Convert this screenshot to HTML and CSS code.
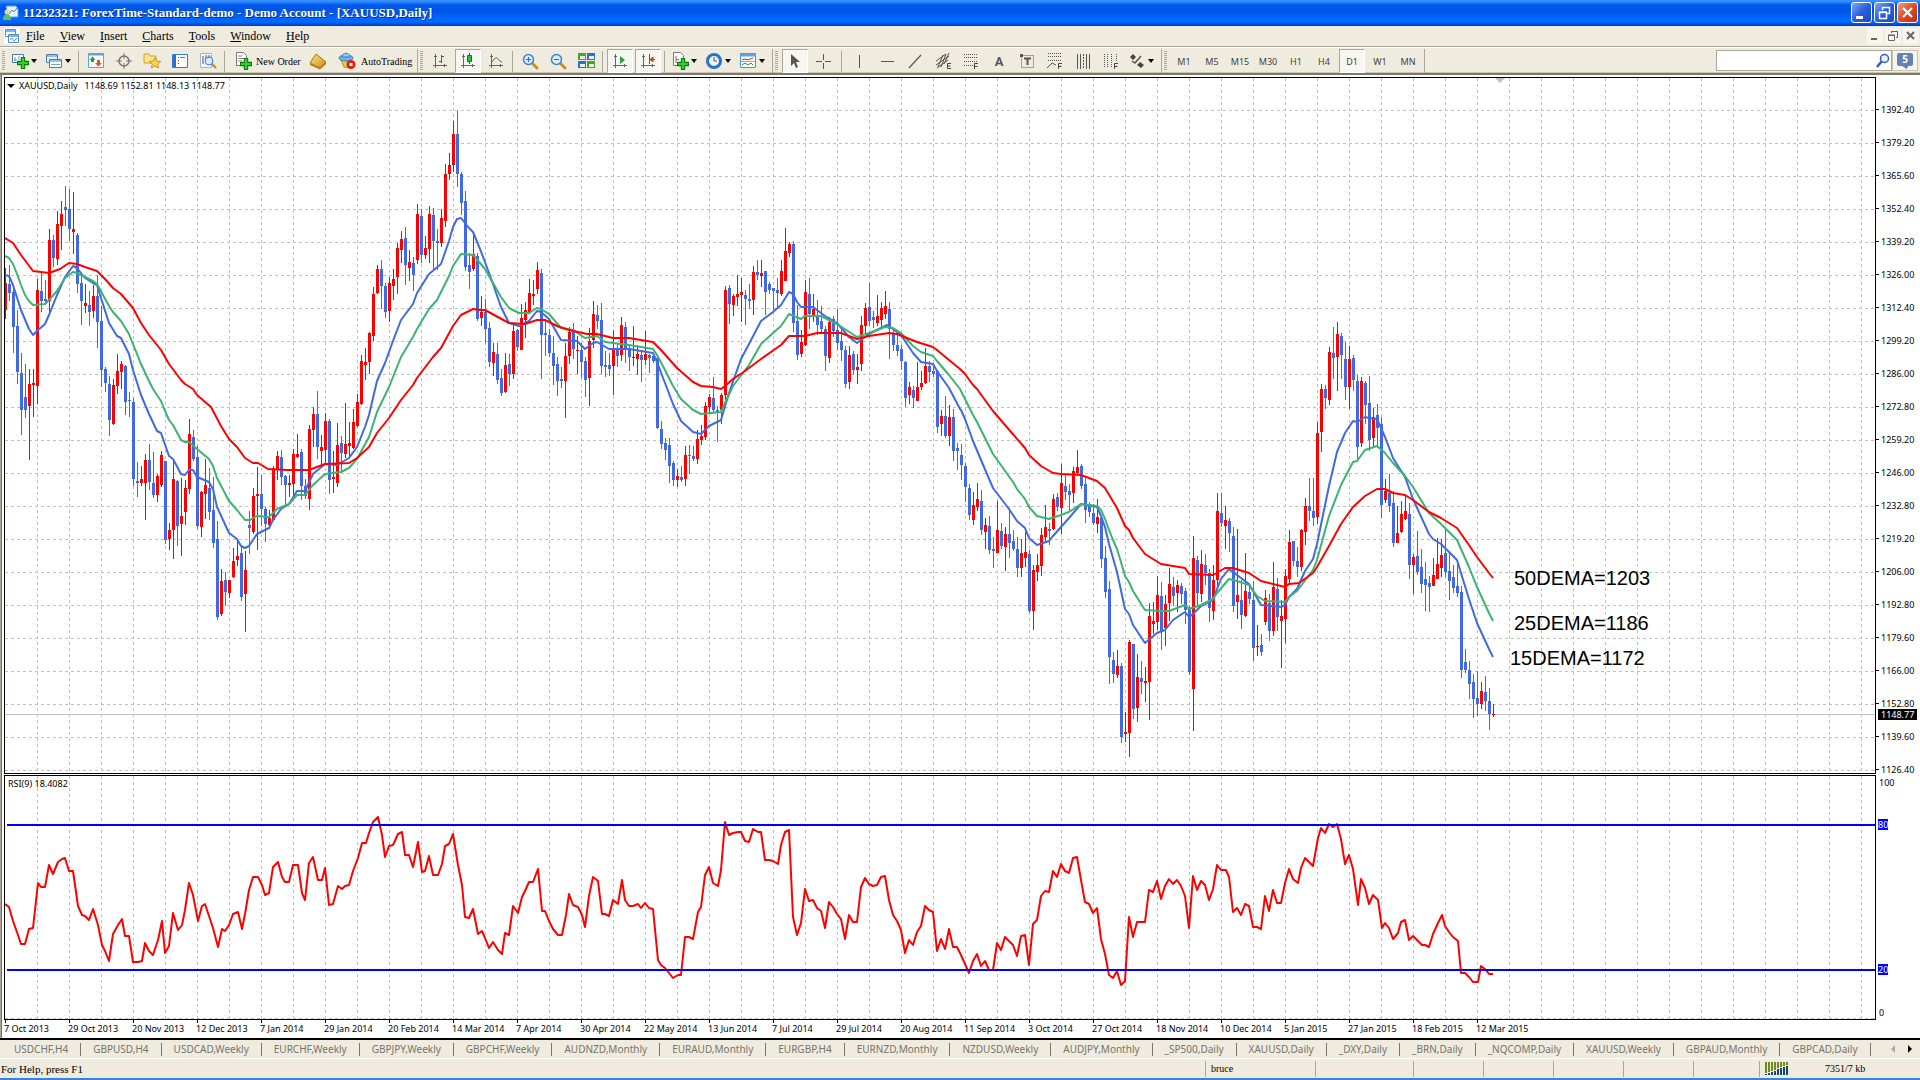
FILE: index.html
```html
<!DOCTYPE html>
<html lang="en">
<head>
<meta charset="utf-8">
<title>11232321: ForexTime-Standard-demo - Demo Account - [XAUUSD,Daily]</title>
<link rel="stylesheet" href="styles.css">
</head>
<body>
<svg class="defs" width="0" height="0" aria-hidden="true">
  <defs>
    <symbol id="plus" viewBox="0 0 11 11"><path d="M4 .5h3V4h3.500v3H7v3.500H4V7H.5V4H4z" fill="#2fd02f" stroke="#0a7a0a"/></symbol>
    <symbol id="axes" viewBox="0 0 16 16"><path d="M3.500 1v14M1 12.500h14M2 3.500h3M12.500 11v3" fill="none" stroke="#666"/></symbol>
    <symbol id="lens" viewBox="0 0 17 17"><path d="M10 10l5 5" stroke="#c89020" stroke-width="3" stroke-linecap="round"/><circle cx="6.500" cy="6.500" r="5" fill="#d8ecff" stroke="#3f83cf" stroke-width="1.500"/></symbol>
    <symbol id="f" viewBox="0 0 5 6"><path d="M.5 6V.5H4M.5 3.500h3" fill="none" stroke="#444"/></symbol>
    <linearGradient id="gold" x1="0" y1="0" x2="1" y2="1"><stop offset="0" stop-color="#ffe890"/><stop offset="1" stop-color="#c88a10"/></linearGradient>
  </defs>
</svg>

<header class="titlebar">
  <svg class="app-icon" width="16" height="16" viewBox="0 0 16 16"><path d="M3 1h10l2 3v8H5z" fill="#e8f4ff" stroke="#5aa0e8"/><path d="M6 9l3-4 2 2 3-4" fill="none" stroke="#3f83cf"/><circle cx="4" cy="7" r="2.500" fill="#f4cf9a"/><path d="M0 15c0-4 2-6 4-6s4 2 4 6z" fill="#5fc05f"/></svg>
  <h1 class="title">11232321: ForexTime-Standard-demo - Demo Account - [XAUUSD,Daily]</h1>
  <div class="window-buttons">
    <button class="wbtn" aria-label="Minimize"><svg width="19" height="19"><path d="M4 13h7v3H4z" fill="#fff"/></svg></button>
    <button class="wbtn" aria-label="Restore"><svg width="19" height="19"><path d="M7.500 7V4.500h7v6H12M7 4.500h8M4.500 9.500h7v6h-7zM4 9h8" fill="none" stroke="#fff" stroke-width="1.500"/></svg></button>
    <button class="wbtn close" aria-label="Close"><svg width="19" height="19"><path d="M5 5l9 9M14 5l-9 9" stroke="#fff" stroke-width="2.200"/></svg></button>
  </div>
</header>

<nav class="menubar">
  <svg class="doc-icon" width="16" height="16" viewBox="0 0 16 16"><path d="M1.500 1.500h10v7h-10zM4.500 6.500h10v8h-10z" fill="#fff" stroke="#4f8fd8"/><path d="M2 3h9M5 8h9" stroke="#7fb4ee" stroke-width="2"/><path d="M6 12l2-2 2 3 3-3" fill="none" stroke="#4f8fd8"/></svg>
  <button class="menu"><u>F</u>ile</button>
  <button class="menu"><u>V</u>iew</button>
  <button class="menu"><u>I</u>nsert</button>
  <button class="menu"><u>C</u>harts</button>
  <button class="menu"><u>T</u>ools</button>
  <button class="menu"><u>W</u>indow</button>
  <button class="menu"><u>H</u>elp</button>
  <div class="mdi-buttons">
    <button class="mbtn" aria-label="Minimize chart"><svg width="16" height="16"><path d="M4 10h6v2H4z" fill="#666"/></svg></button>
    <button class="mbtn" aria-label="Restore chart"><svg width="16" height="16"><path d="M6.500 5V3.500h6v6H11M6 3.500h7M3.500 7.500h6v5h-6zM3 7h7" fill="none" stroke="#666"/></svg></button>
    <button class="mbtn" aria-label="Close chart"><svg width="16" height="16"><path d="M4 4l7 7M11 4l-7 7" stroke="#666" stroke-width="2"/></svg></button>
  </div>
</nav>

<div class="toolbar">
  <div class="group">
    <i class="grip"></i>
    <button class="tool drop" aria-label="New chart"><svg width="18" height="18" viewBox="0 0 18 18"><path d="M1.500 2.500h11v8h-11z" fill="#fff" stroke="#4b79a8"/><path d="M4 5v4M8 4v4M3 8h3" stroke="#6d9dcb"/><use href="#plus" x="6" y="5" width="12" height="12"/></svg><i class="caret"></i></button>
    <button class="tool drop" aria-label="Profiles"><svg width="18" height="18" viewBox="0 0 18 18"><path d="M1.500 2.500h11v8h-11z" fill="#e6f1ff" stroke="#4b79a8"/><path d="M4.500 7.500h12v8h-12z" fill="#fff" stroke="#4b79a8"/><path d="M2 4h10M5 9h11" stroke="#8fbdf0" stroke-width="2"/><path d="M6 12.500h9" stroke="#7aa3cc"/></svg><i class="caret"></i></button>
    <i class="sep"></i>
    <button class="tool" aria-label="Market Watch"><svg width="18" height="18" viewBox="0 0 18 18"><path d="M1.500 1.500h15v14h-15z" fill="#fff" stroke="#5ba2e6"/><path d="M1 2.500h16" stroke="#5ba2e6" stroke-width="2"/><path d="M2.500 8l3-3.500 3 3.500h-1.500v2h-3V8z" fill="#24a324"/><path d="M8 11l3.500 3.500L15 11h-2V8h-3v3z" fill="#e1512b"/></svg></button>
    <button class="tool" aria-label="Data Window"><svg width="18" height="18" viewBox="0 0 18 18"><circle cx="9" cy="9" r="5" fill="none" stroke="#777" stroke-width="1.500"/><path d="M9 1v6M9 11v6M1 9h6M11 9h6" stroke="#777"/></svg></button>
    <button class="tool" aria-label="Navigator"><svg width="18" height="18" viewBox="0 0 18 18"><path d="M1 2h5l1 2h6v7H1z" fill="#fce38d" stroke="#d1a437"/><path d="M12 5.500l1.700 3.600 4 .4-3 2.600.9 3.900-3.600-2-3.600 2 .9-3.900-3-2.600 4-.4z" fill="#ffd544" stroke="#b98619" stroke-width=".8"/></svg></button>
    <button class="tool" aria-label="Terminal"><svg width="18" height="18" viewBox="0 0 18 18"><path d="M1.500 2.500h15v13h-15z" fill="#fff" stroke="#2f7ed8"/><path d="M2 3h3v12H2z" fill="#2f6dd0"/><path d="M7 5.500h1M9 5.500h5M7 8.500h1" stroke="#e44"/><path d="M7 11.500h1" stroke="#444"/></svg></button>
    <button class="tool" aria-label="Strategy Tester"><svg width="18" height="18" viewBox="0 0 18 18"><path d="M1.500 1.500h11v14h-11z" fill="#f4f8fc" stroke="#9db4ca"/><path d="M4 4v8M7 3v5M10 3v3" stroke="#557"/><use href="#lens" x="5" y="4" width="13" height="13"/></svg></button>
    <i class="sep"></i>
    <button class="tool neworder"><svg width="18" height="18" viewBox="0 0 18 18"><path d="M2.500.5h7l3 3v10h-10z" fill="#fff" stroke="#777"/><path d="M4 4h4M4 6.500h6M4 9h4" stroke="#888"/><use href="#plus" x="6" y="6" width="12" height="12"/></svg><span>New Order</span></button>
    <button class="tool" aria-label="MetaEditor"><svg width="18" height="18" viewBox="0 0 18 18"><path d="M7 2l10 8-6 6L1 11z" fill="url(#gold)" stroke="#a8740c"/><path d="M1 11l10 5 6-6v2l-6 5.500L1 13z" fill="#b27c12"/></svg></button>
    <button class="tool auto"><svg width="18" height="18" viewBox="0 0 18 18"><path d="M3 8h11l-2 8-6-1z" fill="#f2c94c" stroke="#b58a20"/><ellipse cx="8" cy="6" rx="7" ry="3" fill="#6fb3ea" stroke="#3c7fbd"/><path d="M4 5c0-5 8-5 8 0z" fill="#8ccaf5" stroke="#3c7fbd"/><circle cx="13" cy="12.500" r="4.500" fill="#dc2213"/><path d="M11.500 11h3v3h-3z" fill="#fff"/></svg><span>AutoTrading</span></button>
  </div>
  <div class="group">
    <i class="grip"></i>
    <button class="tool" aria-label="Bar Chart"><svg width="16" height="16"><use href="#axes" width="16" height="16"/><path d="M9.500 2v8M7 8.500h2M10 3.500h2" stroke="#17892b"/></svg></button>
    <button class="tool on" aria-label="Candlesticks"><svg width="16" height="16"><use href="#axes" width="16" height="16"/><path d="M9.500 0v11" stroke="#0a7a1c"/><path d="M7.500 2.500h4v6h-4z" fill="#1fc23c" stroke="#0a7a1c"/></svg></button>
    <button class="tool" aria-label="Line Chart"><svg width="16" height="16"><use href="#axes" width="16" height="16"/><path d="M4 9c3-5 5-5 6-3s2 2 4 3" fill="none" stroke="#17892b"/></svg></button>
    <i class="sep"></i>
    <button class="tool" aria-label="Zoom In"><svg width="17" height="17"><use href="#lens" width="17" height="17"/><path d="M4 6.500h5M6.500 4v5" stroke="#2a6cc0"/></svg></button>
    <button class="tool" aria-label="Zoom Out"><svg width="17" height="17"><use href="#lens" width="17" height="17"/><path d="M4 6.500h5" stroke="#2a6cc0"/></svg></button>
    <button class="tool" aria-label="Tile Windows"><svg width="17" height="16"><path d="M0 0h8v7H0zM9 8h8v7H9z" fill="#45a52d"/><path d="M9 0h8v7H9zM0 8h8v7H0z" fill="#2f6fd0"/><path d="M2 3h5v3H2zM11 3h5v3h-5zM2 11h5v3H2zM11 11h5v3h-5z" fill="#e6f2ea"/></svg></button>
    <i class="sep"></i>
    <button class="tool on" aria-label="Auto Scroll"><svg width="16" height="16"><use href="#axes" width="16" height="16"/><path d="M8 3l5 4-5 4z" fill="#22a53a"/></svg></button>
    <button class="tool on" aria-label="Chart Shift"><svg width="16" height="16"><use href="#axes" width="16" height="16"/><path d="M9.500 1v10" stroke="#2a5fae"/><path d="M15 6.500h-4M13 4l-3 2.500 3 2.500z" stroke="#c84010" fill="#c84010"/></svg></button>
    <i class="sep"></i>
    <button class="tool drop" aria-label="Indicators"><svg width="18" height="18" viewBox="0 0 18 18"><path d="M2.500.5h7l3 3v10h-10z" fill="#fff" stroke="#777"/><path d="M5 4v7M5 7.500h3" stroke="#777"/><use href="#plus" x="6" y="6" width="12" height="12"/></svg><i class="caret"></i></button>
    <button class="tool drop" aria-label="Periods"><svg width="18" height="18" viewBox="0 0 18 18"><circle cx="9" cy="9" r="6.500" fill="#eef6ff" stroke="#2672cc" stroke-width="3"/><path d="M9 5v4h3" fill="none" stroke="#555"/></svg><i class="caret"></i></button>
    <button class="tool drop" aria-label="Templates"><svg width="18" height="18" viewBox="0 0 18 18"><path d="M1.500 1.500h15v14h-15z" fill="#fff" stroke="#4f8fd8"/><path d="M1 3h16" stroke="#5b9fe8" stroke-width="3"/><path d="M3 8l3-1 3 1 5-2" fill="none" stroke="#b23a1c"/><path d="M3 13l3-2 3 2 3-2 2 2" fill="none" stroke="#27903a"/><path d="M2 9.500h14" stroke="#aac"/></svg><i class="caret"></i></button>
  </div>
  <div class="group">
    <i class="grip"></i>
    <button class="tool on" aria-label="Cursor"><svg width="16" height="16"><path d="M4 1v12l3-3 2 5 2-1-2-5h4z" fill="#555"/></svg></button>
    <button class="tool" aria-label="Crosshair"><svg width="16" height="16"><path d="M8.500 1v6M8.500 10v6M1 8.500h6M10 8.500h6" stroke="#555"/></svg></button>
    <i class="sep wide"></i>
    <button class="tool" aria-label="Vertical Line"><svg width="16" height="16"><path d="M8.500 2v13" stroke="#555"/></svg></button>
    <button class="tool" aria-label="Horizontal Line"><svg width="16" height="16"><path d="M2 8.500h13" stroke="#555"/></svg></button>
    <button class="tool" aria-label="Trendline"><svg width="16" height="16"><path d="M2 15L14 2" stroke="#555" stroke-width="1.200"/></svg></button>
    <button class="tool" aria-label="Equidistant Channel"><svg width="18" height="18"><path d="M2 9L12 2M2 13L15 4M3 16L14 8M4 15L9 3M7 15L12 2M10 12L15 1" stroke="#555"/><path d="M17 11.500h-3.500v5H17M13.500 14h3" fill="none" stroke="#444"/></svg></button>
    <button class="tool" aria-label="Fibonacci Retracement"><svg width="18" height="18"><path d="M2 2.500h14M2 5.500h14M2 9.500h14M2 13.500h9" stroke="#555" stroke-dasharray="1 1"/><use href="#f" x="12" y="11" width="5" height="6"/></svg></button>
    <button class="tool letter" aria-label="Text">A</button>
    <button class="tool" aria-label="Text Label"><svg width="16" height="16"><path d="M2.500 2.500h12v12h-12z" fill="none" stroke="#555" stroke-dasharray="1 1"/><path d="M5 5.500h7M8.500 5v7" stroke="#555" stroke-width="2"/><path d="M1 1h3v3H1z" fill="#555"/></svg></button>
    <button class="tool" aria-label="Fibonacci Fan"><svg width="18" height="18"><path d="M2 1.500h14M2 4.500h14M2 8.500h14" stroke="#555" stroke-dasharray="1 1"/><path d="M1 16l5-5 4 2" fill="none" stroke="#555"/><use href="#f" x="12" y="11" width="5" height="6"/></svg></button>
    <button class="tool" aria-label="Cycle Lines"><svg width="16" height="16"><path d="M2.500 1v15M5.500 1v15M11.500 1v15M14.500 1v15" stroke="#555"/><path d="M8.500 1v15" stroke="#555" stroke-dasharray="2 1"/></svg></button>
    <button class="tool" aria-label="Fibonacci Time Zones"><svg width="18" height="18"><path d="M2.500 2v14M5.500 2v14M9.500 2v14M14.500 2v8" stroke="#555" stroke-dasharray="1 1"/><use href="#f" x="12" y="11" width="5" height="6"/></svg></button>
    <button class="tool drop" aria-label="Arrows"><svg width="18" height="18"><path d="M2 5l3-3 3 3-3 3zM9 13l3-3 4 3-3 3z" fill="#444"/><path d="M4 9l3 2 6-7" fill="none" stroke="#555" stroke-width="1.500"/></svg><i class="caret"></i></button>
  </div>
  <div class="group">
    <i class="grip"></i>
    <button class="tool frame">M1</button>
    <button class="tool frame">M5</button>
    <button class="tool frame">M15</button>
    <button class="tool frame">M30</button>
    <button class="tool frame">H1</button>
    <button class="tool frame">H4</button>
    <button class="tool frame on">D1</button>
    <button class="tool frame">W1</button>
    <button class="tool frame">MN</button>
  </div>
  <div class="search">
    <input type="text" aria-label="Search">
    <svg width="16" height="16"><circle cx="9.500" cy="5.500" r="4" fill="#eef5ff" stroke="#2d5fc4" stroke-width="1.500"/><path d="M6.500 8.500L2 14" stroke="#2d5fc4" stroke-width="2.500"/></svg>
  </div>
  <button class="chat" aria-label="Messages"><span>5</span><svg width="6" height="3"><path d="M0 0h6L5 3z" fill="#6682b0"/></svg></button>
</div>

<main class="chart-window">
  <section class="panel price-panel">
    <svg id="price" class="plot" aria-label="XAUUSD daily candlestick chart"></svg>
    <p class="caption"><i class="caret"></i><span>XAUUSD,Daily&nbsp;&nbsp; 1148.69 1152.81 1148.13 1148.77</span></p>
  </section>
  <div class="scale">
    <ol class="prices" id="prices"></ol>
    <span class="badge last">1148.77</span>
  </div>
  <section class="panel rsi-panel">
    <svg id="rsi" class="plot" aria-label="RSI chart"></svg>
    <p class="caption">RSI(9) 18.4082</p>
  </section>
  <div class="scale rsi-scale">
    <span>100</span>
    <span>0</span>
    <span class="badge over">80</span>
    <span class="badge under">20</span>
  </div>
  <ol class="dates" id="dates"></ol>
</main>

<nav class="tabs">
  <a class="tab" href="#">USDCHF,H4</a><a class="tab" href="#">GBPUSD,H4</a><a class="tab" href="#">USDCAD,Weekly</a><a class="tab" href="#">EURCHF,Weekly</a><a class="tab" href="#">GBPJPY,Weekly</a><a class="tab" href="#">GBPCHF,Weekly</a><a class="tab" href="#">AUDNZD,Monthly</a><a class="tab" href="#">EURAUD,Monthly</a><a class="tab" href="#">EURGBP,H4</a><a class="tab" href="#">EURNZD,Monthly</a><a class="tab" href="#">NZDUSD,Weekly</a><a class="tab" href="#">AUDJPY,Monthly</a><a class="tab" href="#">_SP500,Daily</a><a class="tab" href="#">XAUUSD,Daily</a><a class="tab" href="#">_DXY,Daily</a><a class="tab" href="#">_BRN,Daily</a><a class="tab" href="#">_NQCOMP,Daily</a><a class="tab" href="#">XAUUSD,Weekly</a><a class="tab" href="#">GBPAUD,Monthly</a><a class="tab" href="#">GBPCAD,Daily</a>
  <div class="tab-scroll">
    <button class="arrow" aria-label="Scroll left"><svg width="4" height="8"><path d="M4 0v8L0 4z" fill="#aaa"/></svg></button>
    <button class="arrow" aria-label="Scroll right"><svg width="4" height="8"><path d="M0 0v8l4-4z" fill="#000"/></svg></button>
  </div>
</nav>

<footer class="status">
  <span>For Help, press F1</span>
  <span>bruce</span><span></span><span></span><span></span><span></span><span></span><span></span>
  <span class="traffic"><svg width="24" height="13"><path d="M1 0v11M4 0v10M7 0v9M10 0v8M13 0v6M16 0v5M19 0v4M22 0v3" stroke="#6d8a1c" stroke-width="2"/><path d="M1 12v1M4 11v2M7 10v3M10 9v4M13 7v6M16 6v7M19 5v8M22 4v9" stroke="#16466b" stroke-width="2"/></svg>7351/7 kb</span>
</footer>
<script src="chart.js"></script>
</body>
</html>
```
FILE: styles.css
```css
* { box-sizing: border-box; }
body {
  margin: 0;
  min-height: 100vh;
  display: flex;
  flex-direction: column;
  background: #efebde;
  color: #000;
  font-family: "Liberation Serif", serif;
  font-size: 12px;
  border-bottom: 2px solid #3a83dc;
}
button { font: inherit; color: inherit; padding: 0; border: 0; background: none; }
ol { list-style: none; margin: 0; padding: 0; }
.defs { position: absolute; }

/* Title bar */
.titlebar {
  display: flex;
  align-items: center;
  height: 26px;
  padding: 0 2px 0 3px;
  background: linear-gradient(#3d95ff 0, #2b85ff 2px, #0058ea 5px, #0054e3 11px, #0066ff 18px, #006aff 22px, #0045d0 25px, #0038b8 26px);
}
.title {
  flex: 1;
  margin: 0 0 0 4px;
  font-size: 13px;
  line-height: 16px;
  color: #fff;
  text-shadow: 1px 1px #0a2a80;
}
.window-buttons { display: flex; gap: 2px; padding-bottom: 2px; }
.wbtn {
  width: 21px;
  height: 21px;
  border: 1px solid #fff;
  border-radius: 3px;
  background: linear-gradient(135deg, #7fa6f4, #2a5fe0 50%, #1c49c4);
}
.wbtn.close { background: linear-gradient(135deg, #f0a088, #e04a22 50%, #b8330f); }
.wbtn svg, .mbtn svg { display: block; }

/* Menu */
.menubar { display: flex; align-items: center; height: 20px; padding: 0 1px 0 4px; }
.doc-icon { margin-right: 6px; background: #fff; }
.menu { height: 18px; padding: 0; margin-right: 15px; }
.mdi-buttons { display: flex; gap: 2px; margin-left: auto; }
.mbtn { width: 16px; height: 16px; background: #f7f5ee; }

/* Toolbars */
.toolbar {
  display: flex;
  height: 29px;
  padding: 2px 2px 0 1px;
  border-top: 1px solid #aca899;
  border-bottom: 2px solid #7d7a6d;
  box-shadow: inset 0 1px #fff, inset 0 -1px #c8c4b4;
}
.group { display: flex; align-items: center; border-right: 1px solid #aca899; margin-right: 1px; }
.group + .group { padding-right: 2px; }
.grip {
  flex: none;
  width: 7px;
  height: 20px;
  background: repeating-linear-gradient(#aca899 0 1px, transparent 1px 2px) 1px 0 / 3px 100% no-repeat;
}
.sep { width: 6px; height: 21px; background: linear-gradient(#aca899, #aca899) 2px 0 / 1px 100% no-repeat; }
.sep.wide { width: 8px; background-position: 4px 0; }
.tool { display: flex; align-items: center; justify-content: center; width: 28px; height: 24px; }
.tool svg { flex: none; }
.tool.drop { width: 34px; justify-content: flex-start; padding-left: 3px; gap: 2px; }
.caret { border: 3px solid transparent; border-top: 4px solid #000; border-bottom: 0; width: 0; flex: none; }
.tool.on {
  width: 26px;
  margin: 0 1px;
  background: #f8f6f0;
  border: 1px solid #aca899;
  border-right-color: #fff;
  border-bottom-color: #fff;
}
.neworder, .auto { font-size: 10px; justify-content: flex-start; padding-left: 6px; gap: 4px; white-space: nowrap; }
.neworder { width: 76px; }
.auto { width: 85px; gap: 5px; }
.letter { font: bold 13px Roboto, sans-serif; color: #555; }
.frame { font: 9px "Noto Sans", sans-serif; color: #444; }
.search {
  display: flex;
  align-items: center;
  width: 176px;
  height: 21px;
  margin: 1px 0 0 auto;
  border: 1px solid #aca899;
  background: #fff;
}
.search input { flex: 1; min-width: 0; border: 0; outline: 0; padding: 0 4px; background: none; }
.chat {
  display: flex;
  flex-direction: column;
  align-items: center;
  width: 26px;
  height: 21px;
  margin-top: 1px;
  padding-top: 2px;
  border: 1px solid #c8c4b4;
  background: #f7f5ee;
}
.chat span {
  width: 16px;
  border-radius: 2px;
  background: #6682b0;
  color: #fff;
  font: bold 10px/13px "Noto Sans", sans-serif;
}
.chat svg { display: block; }

/* Chart window */
.chart-window {
  flex: 1;
  display: grid;
  grid-template-columns: 1fr 44px;
  grid-template-rows: 697px 1px 245px auto;
  padding: 2px 0 0 4px;
  background: linear-gradient(90deg, #aca899 0 1px, #716f64 1px 2px, #fff 2px);
  border-bottom: 2px solid #000;
  font: 9px/12px "Noto Sans", sans-serif;
}
.panel { position: relative; border: 1px solid #000; background: #fff; overflow: hidden; }
.rsi-panel, .rsi-scale { grid-row: 3; }
.plot { display: block; width: 100%; height: 100%; }
.caption { position: absolute; top: 2px; left: 3px; margin: 0; display: flex; align-items: center; gap: 4px; }
.price-panel .caption { left: 2px; }
.price-panel .caption .caret { border-width: 4px 4px 0; }
.scale { position: relative; }
.prices { margin: 16px 0 -12px; }
.prices li { display: flex; align-items: center; gap: 2px; height: 33px; }
.prices li::before { content: ""; width: 3px; height: 1px; background: #000; }
.badge { position: absolute; left: 2px; color: #fff; line-height: 11px; background: #00f; }
.badge.last { top: 632px; padding: 0 3px; background: #000; }
.badge.over { top: 44px; }
.badge.under { top: 189px; }
.rsi-scale { display: flex; flex-direction: column; justify-content: space-between; padding: 2px 3px 1px; }
.dates { grid-row: 4; grid-column: 1 / -1; display: flex; overflow: hidden; }
.dates li { flex: none; width: 64px; padding-top: 3px; white-space: nowrap; position: relative; }
.dates li::before { content: ""; position: absolute; left: 1px; top: 0; width: 1px; height: 3px; background: #000; }

/* Annotations and series */
.grid { stroke: #c0c0c0; stroke-dasharray: 3 3; }
.last-line { stroke: #c0c0c0; }
.up { fill: #f00; }
.down { fill: #4169e1; }
.line { fill: none; stroke-width: 2; stroke-linejoin: round; }
.slow, .rsi-line { stroke: #f00; }
.mid { stroke: #3cb371; }
.fast { stroke: #4169e1; }
.level { stroke: #00f; stroke-width: 2; }
.note { font: 20px "Liberation Sans", sans-serif; }

/* Chart tabs */
.tabs { display: flex; align-items: center; height: 19px; padding-left: 2px; border-bottom: 1px solid #fff; }
.tab {
  flex: none;
  padding: 0 12px;
  border-right: 1px solid #77746b;
  color: #77746b;
  font: 10px/13px "Noto Sans", sans-serif;
  text-decoration: none;
}
.tab-scroll { display: flex; gap: 13px; margin: 0 8px 0 auto; }
.arrow { display: flex; }

/* Status bar */
.status {
  display: grid;
  grid-template-columns: 1fr 110px 98px 70px 70px 70px 70px 66px 161px;
  align-items: center;
  height: 19px;
  font-size: 10px;
}
.status span { height: 16px; line-height: 16px; padding: 0 5px; border-left: 1px solid #aca899; }
.status span:first-child { border: 0; padding: 0 1px; font-size: 11px; }
.status .traffic { display: flex; align-items: center; gap: 36px; }
```
FILE: chart.js
```js
const NS = 'http://www.w3.org/2000/svg';
const STEP = 4;
const LEFT = 5;

// Each bar: direction, then high, body top, body bottom and low in ticks
// below the block's origin.
const blocks = [
  { origin: 90, ticks: 2.8, bars: `
r498,540,615,640 b490,543,568,590 b545,566,664,736 b616,661,790,822 b736,792,896,965 b767,860,896,918 r781,823,885,1035 r781,821,826,915
r529,560,829,879 b512,563,591,622 b531,585,591,600 r389,420,591,632 b406,420,470,496 r339,375,473,490 r311,347,381,448 b269,328,336,380
b277,333,389,423 r286,389,398,459 b400,406,543,568 b520,540,591,658 r543,596,605,624 b563,602,622,660 r545,577,619,638 b518,577,650,722
b604,647,784,832 b776,781,820,846 b801,823,924,969 r809,826,935,938 r739,787,829,851 r759,767,790,837 b770,773,874,910 b846,868,872,916
b862,874,1089,1109 b1042,1095,1099,1140 r1053,1089,1100,1109 r1019,1036,1100,1204 b991,1036,1098,1120 b1014,1100,1134,1142 r1075,1081,1134,1154 r1011,1022,1106,1112
b1039,1039,1260,1271 r1212,1232,1257,1288 r1036,1089,1232,1313 b1092,1095,1221,1277 r1086,1193,1215,1305 r1092,1114,1182,1218 r921,963,1117,1131 b952,972,1033,1039
b997,1028,1221,1229 r1123,1126,1224,1252 r1033,1106,1131,1201 b1058,1114,1182,1204 b1084,1176,1268,1282 b1207,1257,1476,1484 r1341,1375,1467,1473 b1350,1372,1406,1445
r1372,1372,1408,1422 r1282,1319,1364,1366 r1260,1305,1316,1333 b1277,1296,1420,1431 r1291,1344,1411,1518 b1179,1218,1226,1299 r1114,1137,1238,1243 r1056,1131,1137,1288
b1078,1131,1173,1221 b1168,1173,1215,1266 r1176,1198,1218,1229 r1053,1058,1204,1207 r1011,1025,1064,1092 b1008,1028,1084,1106 b1078,1081,1106,1162 r1078,1100,1106,1140
r1005,1019,1103,1148 r963,1019,1028,1031 b1005,1014,1109,1148 b1089,1109,1137,1145 r938,949,1145,1176 r888,907,952,1000 b843,907,1000,1033 r966,1000,1011,1053
r904,927,1008,1050 b921,927,1092,1131 r1011,1084,1089,1128 r932,994,1100,1112 b969,988,1016,1067 r876,991,1019,1030 r930,988,997,1028 r893,930,1002,1005
r851,874,941,944 r742,759,879,882 r722,762,770,812 r678,680,762,795 r552,571,689,703 r490,501,568,571 b476,501,549,613 b540,549,622,638
r524,540,619,650 r501,529,549,588 r428,442,524,571 r395,417,448,484 b384,414,490,546 r448,482,498,535 b468,484,518,563 r319,347,476,487
b333,353,462,484 r409,442,462,473 r325,347,445,484 b330,350,423,504 b389,423,427,504 r333,358,428,440 r207,235,367,384 r176,210,235,252
r87,123,210,230 b59,123,235,271 b230,235,316,350 b283,311,496,507 b456,490,510,557 r400,459,501,507 b456,465,641,647
r577,622,638,661 b585,622,669,708 b650,666,762,776 r708,734,764,801 b708,739,812,823 b781,806,848,857 r736,770,846,848 b739,767,795,829
r652,675,795,809 b669,672,720,731 r599,638,728,728 r594,616,644,694 r529,568,622,627 r532,571,577,602 r482,504,557,571 b501,512,686,809
b647,680,686,745 b669,686,736,748 b689,736,773,826 b748,767,815,857 b776,809,815,834 r708,745,815,918 r664,678,745,767 b652,678,725,753
r689,728,731,795 b708,728,762,806 b748,759,812,860 r666,703,806,885 r591,627,700,722 b602,630,647,669 b596,644,773,795 b731,770,776,804
b736,770,781,801 r672,728,773,854 b708,728,745,776 r636,658,742,759 b650,664,728,764 b714,722,748,787 r661,747,750,773 r714,739,753,798
b728,742,756,818 r675,739,756,770 b739,742,750,792 b739,745,759,763 b742,750,946,949 b927,949,991,1005 b974,988,1008,1036 b974,994,1053,1100
b1039,1044,1092,1109 r1061,1081,1092,1112 b1053,1084,1092,1098 r997,1022,1089,1109 b994,1022,1026,1075 b997,1025,1033,1039 r952,977,1033,1047 r938,969,980,994
r874,885,972,980 r851,860,888,904 b804,862,896,902 b885,896,904,986 r848,854,896,935 r549,560,854,868 b546,554,599,655 r571,577,602,633
r518,571,580,605 r526,566,574,650 b560,574,585,658 b543,585,591,613 r493,510,588,630 b476,510,518,532 r476,512,521,552 b507,507,566,630
b538,543,560,571 b554,554,563,616 b526,560,568,613 r476,507,571,577 r386,451,535,535 r426,431,456,468 b423,431,652,678 b602,647,742,756
r672,706,739,748 r532,566,714,717 b526,571,627,669 r571,613,630,650 b588,630,658,686 b605,647,669,680 b661,669,745,787 r636,650,750,764
b633,641,675,692 b613,672,708,728 b672,703,728,759 b717,728,823,834 r717,742,818,837 b731,739,784,798 r739,776,784,823 r633,658,767,787
r596,610,661,686 b540,608,647,661 b619,636,644,666 r574,633,652,661 r594,610,644,664 r563,605,627,641 b594,613,669,753 b669,680,714,731
b680,714,731,745 b714,725,759,784 b759,762,862,888` },
  { origin: 230, ticks: 2.8, bars: `
r426,440,462,487 b437,448,470,498 r370,440,479,479 r395,428,440,448 r330,381,428,431 b367,381,398,426 b372,395,403,412 b392,395,552,568
r504,521,543,577 b465,521,577,582 r490,524,577,605 b501,524,619,647 b596,610,619,672 b599,630,658,700 b652,661,720,762 b711,722,798,812
r734,770,812,826 r708,753,776,787 b728,759,840,854 r806,826,846,893 b801,829,896,907 b860,893,899,946 r759,840,904,904 b820,843,885,893
r832,851,888,955 b778,851,876,918 b840,871,893,899 b860,893,946,972 r865,904,946,972 r846,902,918,944 b896,907,1067,1072 r938,952,1067,1120
r907,938,958,983 r834,854,941,969 r770,832,860,874 b820,837,843,882 r739,753,837,840 b736,748,776,787 r655,708,778,851 b686,717,734,756
b711,731,742,790 r664,675,736,764 r616,664,680,686 b655,661,717,725 b694,711,784,820 b762,767,790,804 b767,792,820,826 r753,804,823,848
b801,806,921,946 b885,918,1014,1030 b983,1005,1196,1271 b1182,1204,1243,1268 r1176,1221,1246,1254 b1212,1221,1420,1436 r1350,1406,1411,1434 r1148,1154,1408,1476
b1160,1160,1341,1369 r1187,1252,1338,1378 b1207,1254,1266,1299 r1224,1263,1267,1322 r1044,1081,1266,1372 r1042,1095,1103,1131 r969,1022,1098,1120 b986,1025,1126,1176
r1022,1047,1114,1165 r946,991,1044,1095 b972,1000,1025,1053 r980,994,1016,1070 b988,997,1019,1047 b1002,1011,1064,1103 b1053,1061,1238,1246 r857,918,1285,1403
b913,924,1016,1050 r896,935,1019,1042 b907,938,960,994 b949,960,1058,1098 r938,980,1067,1092 r736,787,980,1002 b736,792,820,832 r773,812,829,893
b806,815,848,902 b832,857,1053,1070 r837,1022,1042,1089 b980,1036,1078,1117 r904,1011,1081,1084 b994,1014,1033,1047 b983,1036,1170,1207 r1106,1165,1168,1193
b1131,1162,1182,1193 r1008,1030,1098,1106 b1019,1044,1123,1151 r930,1000,1123,1137 b974,1005,1084,1123 r1036,1081,1095,1226 r949,969,1089,1156 r840,874,977,994
b871,871,927,941 b888,927,944,972 r837,840,944,955 r750,773,846,882 b694,773,787,815 b694,787,806,829 r538,568,804,823 r431,445,566,622
b434,445,470,501 r328,342,476,490 b272,344,358,417 r258,291,356,451 b288,297,350,417 b314,361,440,476 r325,361,440,501 b350,358,420,451
b406,423,608,641 r412,423,596,608 b423,428,490,543 b409,484,588,619 r498,524,582,610 b487,518,554,610` },
  { origin: 300, ticks: 3, bars: `
b351,372,614,654 r537,573,600,609 b522,579,618,636 b573,609,729,741 r618,699,729,729 r603,642,696,699 r588,633,657,660 b609,642,795,837
r762,771,795,882 b693,768,816,825 b747,801,852,879 b786,837,855,933 b828,849,861,936 r774,825,858,858 r714,792,837,837 r717,765,804,831
b687,759,816,831 b753,813,843,900 b795,831,864,879 b789,858,879,891 b858,876,1110,1134 b1047,1086,1110,1119 b1083,1110,1152,1197 b1122,1146,1197,1254
b1113,1194,1212,1248 r1146,1173,1212,1227 b1128,1176,1203,1233 b1164,1203,1242,1290 r1212,1241,1244,1251` }
];

// Moving averages: four stretches per line, each in its own units.
const units = [
  { x0: 0, sx: 3, y0: 90, sy: 2.8 },
  { x0: 480, sx: 3, y0: 90, sy: 2.8 },
  { x0: 900, sx: 3, y0: 230, sy: 2.8 },
  { x0: LEFT, sx: 1 / STEP, y0: 0, sy: 1 }
];
const averages = {
  fast: [
    '16,517 28,522 40,546 64,616 88,669 100,686 112,675 136,655 148,630 172,575 196,523 220,493 232,498 256,526 280,540 292,547 304,582 328,652 352,688 364,694 388,739 400,784 424,854 448,906 472,955 484,961 508,1025 520,1032 544,1076 556,1078 568,1063 580,1065 592,1084 628,1098 640,1117 652,1168 688,1240 712,1256 724,1277 736,1282 748,1277 772,1243 808,1226 820,1204 844,1172 868,1158 892,1123 916,1123 940,1075 976,1048 1012,1050 1048,1031 1072,1000 1096,944 1108,909 1132,815 1156,764 1180,703 1204,644 1240,599 1252,568 1288,515 1324,487 1348,423 1360,384 1372,360 1384,358 1408,387 1420,398',
    '0,445 16,482 40,543 64,608 88,652 118,661 148,647 172,619 184,621 208,641 244,700 292,704 316,725 340,708 352,706 388,726 448,724 520,736 532,762 556,820 580,879 604,927 640,958 664,964 688,941 724,924 748,848 784,753 808,711 844,647 880,622 904,602 928,566 940,570 952,594 964,608 1000,608 1036,633 1072,652 1108,692 1132,709 1168,683 1192,672 1220,658 1240,669 1264,686 1300,736 1324,761 1360,767 1372,787 1408,834 1440,893',
    '184,504 196,530 220,591 244,644 280,722 328,781 352,815 376,834 388,862 412,882 448,871 460,857 508,806 544,768 592,776 604,801 616,832 628,879 652,958 676,1061 688,1075 700,1106 736,1157 772,1128 796,1120 820,1092 856,1070 868,1084 880,1075 904,1053 940,1036 952,1005 964,977 988,949 1012,966 1048,991 1084,1050 1144,1056 1156,1050 1168,1028 1192,1006 1216,955 1240,921 1252,880 1288,717 1312,622 1336,568 1360,535 1372,537 1396,524 1408,526',
    '343,419 345,437 347,458 350,477 352,499 356,534 357,539 359,544 363,560 366,599 368,623 371,649 372,657'
  ],
  mid: [
    '16,464 28,470 40,488 52,515 64,547 76,573 88,591 100,602 136,598 148,589 172,562 196,526 220,510 232,512 256,523 280,535 292,542 328,605 340,622 364,647 388,682 400,711 424,767 448,815 460,838 484,871 496,900 508,925 520,938 544,980 556,986 568,985 592,1005 628,1032 640,1053 652,1087 688,1151 712,1176 736,1204 750,1204 772,1193 808,1195 832,1172 868,1158 892,1134 916,1134 940,1106 976,1076 1024,1070 1048,1058 1072,1033 1108,971 1132,902 1168,831 1204,748 1240,692 1252,669 1288,613 1312,587 1348,521 1360,493 1384,459 1420,462',
    '0,484 16,501 40,540 64,580 88,610 118,625 148,623 172,610 184,612 208,628 244,666 280,672 316,694 352,689 376,705 448,714 520,725 532,742 556,784 580,829 604,865 640,897 664,907 724,902 736,876 760,829 808,770 844,711 880,680 904,661 928,627 964,640 976,633 1024,634 1072,655 1132,692 1168,680 1216,664 1240,666 1264,680 1300,717 1324,734 1360,744 1372,759 1408,798 1440,837',
    '184,450 220,518 232,537 280,628 340,706 352,725 376,753 388,776 412,801 448,809 484,798 508,790 544,767 592,773 604,784 616,809 628,840 640,868 652,893 664,930 676,969 688,985 700,1011 736,1064 784,1067 808,1066 856,1049 868,1061 904,1050 940,1034 952,1016 988,977 1012,983 1048,994 1072,1025 1096,1039 1156,1042 1168,1027 1192,1011 1240,952 1252,923 1288,801 1324,714 1360,650 1372,646 1396,616',
    '343,446 345,453 347,463 350,476 352,487 356,513 359,524 363,540 366,567 368,587 371,613 372,621'
  ],
  slow: [
    '16,414 40,428 64,462 100,506 148,511 180,500 208,485 232,486 256,495 292,507 316,530 340,554 364,571 400,611 424,652 448,686 484,728 508,768 544,813 556,824 580,836 592,855 632,888 664,942 688,976 712,1000 736,1031 760,1043 775,1045 805,1060 860,1063 928,1063 976,1048 1048,1043 1072,1031 1108,1000 1132,961 1168,918 1204,868 1240,826 1252,806 1300,748 1324,722 1360,661 1384,631 1420,614',
    '0,616 16,616 48,632 88,652 136,656 172,644 196,644 232,661 268,672 320,683 352,682 400,694 448,694 520,706 544,728 592,778 640,817 664,829 700,831 724,837 736,829 760,808 796,787 844,753 904,714 928,689 976,688 1012,680 1084,680 1132,697 1168,689 1228,680 1252,682 1312,706 1360,720 1372,729 1408,756 1440,781',
    '196,403 220,433 232,445 280,507 316,546 376,611 388,630 424,662 460,679 484,684 544,686 592,703 616,722 652,778 676,829 688,840 700,862 736,907 784,935 856,946 868,962 940,966 976,947 1000,947 1048,961 1084,983 1144,997 1156,1000 1168,991 1198,988 1240,961 1252,944 1288,885 1324,823 1360,776 1396,745',
    '343,489 345,489 347,493 350,495 352,500 356,512 359,518 363,528 366,545 368,557 371,573 372,578'
  ]
};

const rsiUnits = [0, 640, 1280].map(x0 => ({ x0, sx: 2.45, y0: 770, sy: 3 }));
const rsi = [
  '13,402 23,412 33,453 43,495 52,522 62,522 72,477 82,474 92,339 101,351 111,351 121,285 131,312 141,276 151,267 160,264 170,303 180,303 190,408 200,434 209,438 219,450 229,417 239,465 249,525 258,543 268,573 278,492 288,465 298,447 307,498 317,498 327,576 337,576 347,573 356,519 366,543 376,555 386,510 396,453 405,549 415,528 425,429 435,480 445,465 454,420 464,339 474,375 484,453 494,408 503,402 513,438 523,474 533,531 543,477 552,483 562,465 572,432 582,426 592,477 601,432 611,360 621,321 631,321 641,345 650,375 660,369 670,291 680,276 690,321 699,336 709,336 719,285 729,285 739,369 748,390 758,279 768,261 778,330 788,330 797,294 807,405 817,402 827,347 837,357 846,347 856,345 866,303 876,264 886,219 896,219 905,189 915,156 925,141 935,195 944,261 954,228 964,225 974,192 984,186 993,255 1003,255 1013,291 1023,216 1033,306 1042,303 1052,258 1062,315 1072,315 1082,282 1091,228 1101,222 1111,192 1121,285 1131,345 1140,441 1150,444 1160,417 1170,492 1180,483 1189,504 1199,534 1209,516 1219,540 1229,552 1238,489 1248,495 1258,408 1268,429 1278,381 1287,363 1297,336 1307,336 1317,297 1327,423 1336,423 1346,453 1356,477 1366,495 1376,495 1386,435 1395,372 1405,405 1415,411 1425,435 1434,471 1444,378 1454,321 1464,333 1474,432 1483,432 1493,438 1503,390 1513,402 1523,330 1532,390 1542,408 1552,408 1562,402',
  '3,414 13,399 23,414 33,417 43,570 52,585 62,594 82,624 92,615 101,615 111,501 121,501 131,507 141,426 150,411 160,315 170,291 180,339 190,348 199,300 209,156 219,195 229,190 239,187 248,187 258,213 268,216 278,177 288,186 297,186 307,270 317,270 327,273 337,282 346,225 356,186 366,180 376,440 385,495 395,459 405,357 415,393 425,390 434,414 444,423 454,474 464,396 473,411 483,432 493,447 503,507 513,435 522,456 532,456 542,351 552,324 562,342 571,348 581,345 591,321 601,318 611,390 620,435 630,453 640,480 650,549 660,510 670,525 679,486 689,468 699,408 709,420 719,426 728,543 738,507 748,537 758,477 768,531 777,531 787,555 797,582 807,609 817,573 826,552 836,588 846,573 856,600 866,600 875,519 885,540 895,501 905,513 915,525 924,558 934,498 944,495 954,585 963,462 973,450 983,378 993,363 1003,366 1012,303 1022,321 1032,282 1042,303 1052,309 1061,264 1071,261 1081,330 1091,396 1101,402 1110,429 1120,414 1130,507 1140,552 1150,615 1160,624 1169,603 1179,645 1189,633 1199,441 1208,501 1218,456 1238,456 1248,360 1257,366 1267,333 1277,387 1287,348 1297,327 1306,342 1316,330 1326,348 1336,378 1346,474 1355,318 1365,360 1375,333 1385,345 1395,390 1404,357 1414,285 1424,300 1436,300 1444,321 1454,426 1463,414 1473,435 1483,402 1493,408 1503,471 1512,471 1522,477 1532,378 1542,423 1551,360 1561,399',
  '3,399 13,339 23,297 33,327 43,339 52,294 62,264 72,276 82,288 92,204 101,174 111,189 121,162 131,171 140,162 150,207 160,282 170,255 180,297 190,405 199,327 209,354 219,402 229,375 239,390 249,474 258,459 268,474 278,507 288,489 297,456 307,450 317,510 327,498 337,513 347,525 356,525 366,531 376,492 386,459 396,435 405,468 415,486 425,501 435,513 444,609 454,609 464,621 474,636 484,636 493,588 503,597 513,612 523,612'
];

function add(parent, name, attrs, text) {
  const el = document.createElementNS(NS, name);
  for (const key in attrs) el.setAttribute(key, attrs[key]);
  if (text) el.textContent = text;
  parent.append(el);
  return el;
}

function points(stretches, scale) {
  return stretches.flatMap((stretch, n) => {
    const u = scale[n];
    return stretch.split(' ').map(pair => {
      const [x, y] = pair.split(',').map(Number);
      return Math.round(u.x0 + x / u.sx) + ',' + Math.round(u.y0 + y / u.sy);
    });
  }).join(' ');
}

function verticals(svg, width, top, height) {
  for (let x = LEFT + 32; x < width + LEFT; x += 32) {
    add(svg, 'path', { class: 'grid', d: `M${x + 0.5} ${top}v${height}` });
  }
}

const price = document.getElementById('price');
const width = price.clientWidth;
const main = add(price, 'g', { transform: 'translate(-5 -78)' });
verticals(main, width, 78, 695);
for (let y = 110; y < 773; y += 33) {
  add(main, 'path', { class: 'grid', d: `M${LEFT} ${y + 0.5}h${width}` });
}
add(main, 'path', { class: 'last-line', d: `M${LEFT} 714.5h${width}` });
add(main, 'path', { d: 'M1495 78h10l-5 5z', fill: '#c0c0c0' });

let index = 0;
for (const block of blocks) {
  for (const bar of block.bars.trim().split(/\s+/)) {
    const [high, top, bottom, low] = bar.slice(1).split(',')
      .map(v => Math.round(block.origin + v / block.ticks));
    const x = LEFT + STEP * index++;
    const h = Math.max(1, bottom - top);
    add(main, 'path', {
      class: bar[0] === 'r' ? 'up' : 'down',
      d: `M${x} ${high}h1v${low - high}h-1zM${x - 1} ${top}h3v${h}h-3z`
    });
  }
}
for (const name of ['fast', 'mid', 'slow']) {
  add(main, 'polyline', { class: 'line ' + name, points: points(averages[name], units) });
}
add(main, 'text', { class: 'note', x: 1514, y: 585 }, '50DEMA=1203');
add(main, 'text', { class: 'note', x: 1514, y: 630 }, '25DEMA=1186');
add(main, 'text', { class: 'note', x: 1510, y: 665 }, '15DEMA=1172');

const osc = add(document.getElementById('rsi'), 'g', { transform: 'translate(-5 -776)' });
verticals(osc, width, 776, 243);
add(osc, 'path', { class: 'grid', d: `M${LEFT} 1018.5h${width}` });
add(osc, 'polyline', { class: 'line rsi-line', points: points(rsi, rsiUnits) });
for (const y of [825, 970]) add(osc, 'path', { class: 'level', d: `M7 ${y}h${width}` });

function fill(id, texts) {
  const list = document.getElementById(id);
  for (const text of texts) {
    const li = document.createElement('li');
    li.textContent = text;
    list.append(li);
  }
}

fill('prices', ['1392.40', '1379.20', '1365.60', '1352.40', '1339.20', '1326.00', '1312.40',
  '1299.20', '1286.00', '1272.80', '1259.20', '1246.00', '1232.80', '1219.20', '1206.00',
  '1192.80', '1179.60', '1166.00', '1152.80', '1139.60', '1126.40']);

fill('dates', ['7 Oct 2013', '29 Oct 2013', '20 Nov 2013', '12 Dec 2013', '7 Jan 2014', '29 Jan 2014',
  '20 Feb 2014', '14 Mar 2014', '7 Apr 2014', '30 Apr 2014', '22 May 2014', '13 Jun 2014', '7 Jul 2014',
  '29 Jul 2014', '20 Aug 2014', '11 Sep 2014', '3 Oct 2014', '27 Oct 2014', '18 Nov 2014', '10 Dec 2014',
  '5 Jan 2015', '27 Jan 2015', '18 Feb 2015', '12 Mar 2015']);
```
